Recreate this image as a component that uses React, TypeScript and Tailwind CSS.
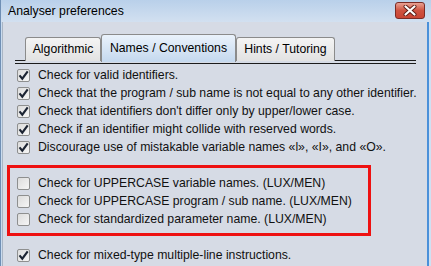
const font = { fontFamily: '"Liberation Sans", Arial, sans-serif' }

const topChecks = [
  'Check for valid identifiers.',
  'Check that the program / sub name is not equal to any other identifier.',
  "Check that identifiers don't differ only by upper/lower case.",
  'Check if an identifier might collide with reserved words.',
  'Discourage use of mistakable variable names «l», «I», and «O».',
]

const boxedChecks = [
  'Check for UPPERCASE variable names. (LUX/MEN)',
  'Check for UPPERCASE program / sub name. (LUX/MEN)',
  'Check for standardized parameter name. (LUX/MEN)',
]

function CheckBox({ checked }: { checked: boolean }) {
  return (
    <div className="w-[13px] h-[13px] rounded-[2px] border border-[#8e8f8f] bg-gradient-to-br from-[#dcdcdc] to-[#f6f6f6] flex items-center justify-center shrink-0">
      {checked && (
        <svg width="11" height="11" viewBox="0 0 11 11">
          <path d="M1.5 5.3 L4.3 8.7 L9.7 1.3" fill="none" stroke="#1c2433" strokeWidth="2.1" />
        </svg>
      )}
    </div>
  )
}

function Row({ label, checked }: { label: string; checked: boolean }) {
  return (
    <div className="h-[18px] flex items-center gap-[8px]">
      <CheckBox checked={checked} />
      <span className="text-[12.25px] text-[#111] whitespace-nowrap leading-none">{label}</span>
    </div>
  )
}

export default function App() {
  return (
    <div className="w-[431px] h-[266px] overflow-hidden flex flex-col bg-[#d6dbe5]" style={font}>
      {/* Title bar */}
      <div className="h-[22px] shrink-0 flex items-center justify-between pl-[7px] pr-[6px] bg-gradient-to-b from-[#b9d0ea] to-[#d2e0f0] border-l border-[#6f8fb5]">
        <span className="text-[12.25px] text-black">Analyser preferences</span>
        <div className="w-[30px] h-[17px] mt-[-2px] rounded-[3px] border border-[#7b2b25] bg-gradient-to-b from-[#e8a093] via-[#cf5240] to-[#c94433] flex items-center justify-center">
          <svg width="14" height="11" viewBox="0 0 14 11">
            <path d="M2.5 1.5 L11.5 9.5 M11.5 1.5 L2.5 9.5" stroke="#5a1a14" strokeWidth="4" strokeLinecap="round" />
            <path d="M2.5 1.5 L11.5 9.5 M11.5 1.5 L2.5 9.5" stroke="#ffffff" strokeWidth="2.2" strokeLinecap="round" />
          </svg>
        </div>
      </div>

      {/* Body */}
      <div className="flex-1 flex border-l border-[#6f8fb5]">
        <div className="w-[2px] bg-[#c9dbef] border-r border-[#a9b5c4]" />
        <div className="flex-1 flex flex-col">
          {/* Tabs */}
          <div className="ml-[12px] w-[401px] mt-[11px] h-[28px] flex items-end pl-[10px] border-b border-[#1b1b1b]">
            <div className="w-[76px] h-[24px] -mb-px rounded-t-[3px] border border-[#8b8b8b] border-b-0 bg-gradient-to-b from-[#f4f4f4] to-[#e2e2e2] flex items-center justify-center text-[12.25px] text-black">
              Algorithmic
            </div>
            <div className="w-[135px] h-[28px] -mb-[2px] relative z-10 rounded-t-[3px] border border-[#8b8b8b] border-b-0 bg-gradient-to-b from-[#eaf2fb] to-[#c4d8ee] flex items-center justify-center text-[12.25px] text-black pb-[1px]">
              Names / Conventions
            </div>
            <div className="w-[99px] h-[24px] -mb-px rounded-t-[3px] border border-[#8b8b8b] border-b-0 bg-gradient-to-b from-[#f4f4f4] to-[#e2e2e2] flex items-center justify-center text-[12.25px] text-black">
              Hints / Tutoring
            </div>
          </div>
          <div className="ml-[12px] w-[401px] mt-[2px] h-px bg-[#1b1b1b]" />

          {/* Options */}
          <div className="flex flex-col pl-[14px] pt-[2px]">
            {topChecks.map((c) => (
              <Row key={c} label={c} checked />
            ))}
          </div>

          <div className="ml-[4px] mt-[9px] w-[364px] border-[3px] border-[#ee1111] pl-[7px] pt-[6px] pb-[5px] flex flex-col">
            {boxedChecks.map((c) => (
              <Row key={c} label={c} checked={false} />
            ))}
          </div>

          <div className="pl-[14px] mt-[10px]">
            <Row label="Check for mixed-type multiple-line instructions." checked />
          </div>
        </div>
        <div className="w-[2px] bg-[#4a90d9]" />
        <div className="w-[2px] bg-[#cfe0f2]" />
      </div>
    </div>
  )
}
